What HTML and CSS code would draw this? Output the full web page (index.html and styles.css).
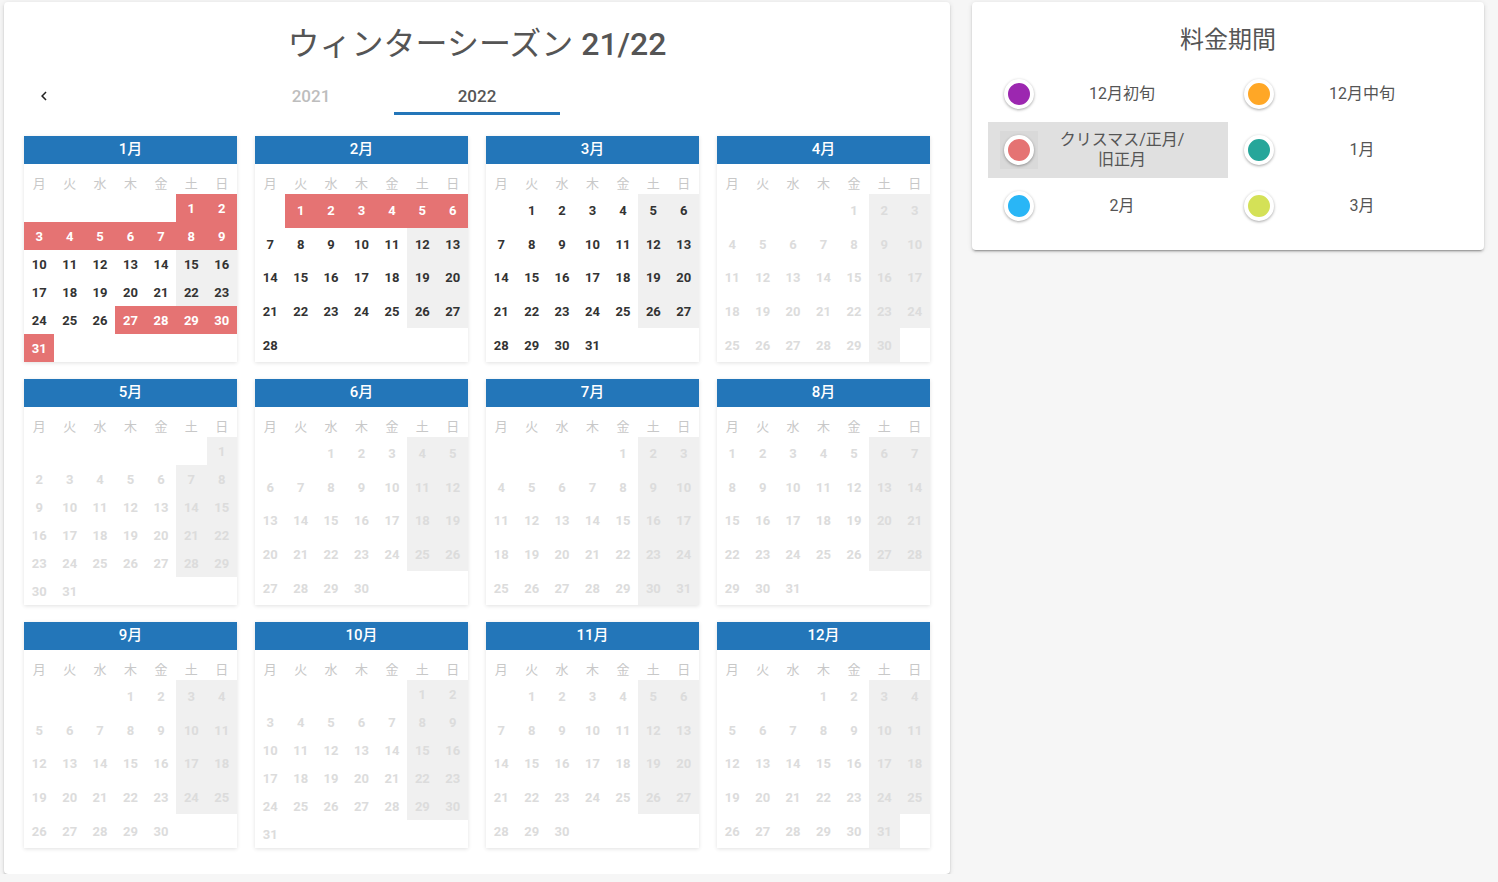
FILE: index.html
```html
<!DOCTYPE html>
<html lang="ja">
<head>
<meta charset="utf-8">
<title>ウィンターシーズン 21/22</title>
<link rel="stylesheet" href="styles.css">
</head>
<body>
<div class="page">
  <section class="main">
    <h1 class="title">ウィンターシーズン <span class="num">21/22</span></h1>
    <div class="tabs">
      <div class="arrow"><svg width="18" height="18" viewBox="0 0 24 24"><path d="M15.41 16.58L10.83 12l4.58-4.59L14 6l-6 6 6 6z" fill="#222"/></svg></div>
      <div class="tab first">2021</div>
      <div class="tab active">2022</div>
    </div>
    <div class="grid">
      <!-- Jan -->
      <div class="cal">
        <h3>1月</h3>
        <div class="wd"><span>月</span><span>火</span><span>水</span><span>木</span><span>金</span><span>土</span><span>日</span></div>
        <div class="body">
          <div class="wk"><span></span><span></span><span></span><span></span><span></span><span class="r">1</span><span class="r">2</span></div>
          <div class="wk"><span class="r">3</span><span class="r">4</span><span class="r">5</span><span class="r">6</span><span class="r">7</span><span class="r">8</span><span class="r">9</span></div>
          <div class="wk"><span>10</span><span>11</span><span>12</span><span>13</span><span>14</span><span class="w">15</span><span class="w">16</span></div>
          <div class="wk"><span>17</span><span>18</span><span>19</span><span>20</span><span>21</span><span class="w">22</span><span class="w">23</span></div>
          <div class="wk"><span>24</span><span>25</span><span>26</span><span class="r">27</span><span class="r">28</span><span class="r">29</span><span class="r">30</span></div>
          <div class="wk"><span class="r">31</span><span></span><span></span><span></span><span></span><span></span><span></span></div>
        </div>
      </div>
      <!-- Feb -->
      <div class="cal">
        <h3>2月</h3>
        <div class="wd"><span>月</span><span>火</span><span>水</span><span>木</span><span>金</span><span>土</span><span>日</span></div>
        <div class="body">
          <div class="wk"><span></span><span class="r">1</span><span class="r">2</span><span class="r">3</span><span class="r">4</span><span class="r">5</span><span class="r">6</span></div>
          <div class="wk"><span>7</span><span>8</span><span>9</span><span>10</span><span>11</span><span class="w">12</span><span class="w">13</span></div>
          <div class="wk"><span>14</span><span>15</span><span>16</span><span>17</span><span>18</span><span class="w">19</span><span class="w">20</span></div>
          <div class="wk"><span>21</span><span>22</span><span>23</span><span>24</span><span>25</span><span class="w">26</span><span class="w">27</span></div>
          <div class="wk"><span>28</span><span></span><span></span><span></span><span></span><span></span><span></span></div>
        </div>
      </div>
      <!-- Mar -->
      <div class="cal">
        <h3>3月</h3>
        <div class="wd"><span>月</span><span>火</span><span>水</span><span>木</span><span>金</span><span>土</span><span>日</span></div>
        <div class="body">
          <div class="wk"><span></span><span>1</span><span>2</span><span>3</span><span>4</span><span class="w">5</span><span class="w">6</span></div>
          <div class="wk"><span>7</span><span>8</span><span>9</span><span>10</span><span>11</span><span class="w">12</span><span class="w">13</span></div>
          <div class="wk"><span>14</span><span>15</span><span>16</span><span>17</span><span>18</span><span class="w">19</span><span class="w">20</span></div>
          <div class="wk"><span>21</span><span>22</span><span>23</span><span>24</span><span>25</span><span class="w">26</span><span class="w">27</span></div>
          <div class="wk"><span>28</span><span>29</span><span>30</span><span>31</span><span></span><span></span><span></span></div>
        </div>
      </div>
      <!-- Apr -->
      <div class="cal dim">
        <h3>4月</h3>
        <div class="wd"><span>月</span><span>火</span><span>水</span><span>木</span><span>金</span><span>土</span><span>日</span></div>
        <div class="body">
          <div class="wk"><span></span><span></span><span></span><span></span><span>1</span><span class="w">2</span><span class="w">3</span></div>
          <div class="wk"><span>4</span><span>5</span><span>6</span><span>7</span><span>8</span><span class="w">9</span><span class="w">10</span></div>
          <div class="wk"><span>11</span><span>12</span><span>13</span><span>14</span><span>15</span><span class="w">16</span><span class="w">17</span></div>
          <div class="wk"><span>18</span><span>19</span><span>20</span><span>21</span><span>22</span><span class="w">23</span><span class="w">24</span></div>
          <div class="wk"><span>25</span><span>26</span><span>27</span><span>28</span><span>29</span><span class="w">30</span><span></span></div>
        </div>
      </div>
      <!-- May -->
      <div class="cal dim">
        <h3>5月</h3>
        <div class="wd"><span>月</span><span>火</span><span>水</span><span>木</span><span>金</span><span>土</span><span>日</span></div>
        <div class="body">
          <div class="wk"><span></span><span></span><span></span><span></span><span></span><span></span><span class="w">1</span></div>
          <div class="wk"><span>2</span><span>3</span><span>4</span><span>5</span><span>6</span><span class="w">7</span><span class="w">8</span></div>
          <div class="wk"><span>9</span><span>10</span><span>11</span><span>12</span><span>13</span><span class="w">14</span><span class="w">15</span></div>
          <div class="wk"><span>16</span><span>17</span><span>18</span><span>19</span><span>20</span><span class="w">21</span><span class="w">22</span></div>
          <div class="wk"><span>23</span><span>24</span><span>25</span><span>26</span><span>27</span><span class="w">28</span><span class="w">29</span></div>
          <div class="wk"><span>30</span><span>31</span><span></span><span></span><span></span><span></span><span></span></div>
        </div>
      </div>
      <!-- Jun -->
      <div class="cal dim">
        <h3>6月</h3>
        <div class="wd"><span>月</span><span>火</span><span>水</span><span>木</span><span>金</span><span>土</span><span>日</span></div>
        <div class="body">
          <div class="wk"><span></span><span></span><span>1</span><span>2</span><span>3</span><span class="w">4</span><span class="w">5</span></div>
          <div class="wk"><span>6</span><span>7</span><span>8</span><span>9</span><span>10</span><span class="w">11</span><span class="w">12</span></div>
          <div class="wk"><span>13</span><span>14</span><span>15</span><span>16</span><span>17</span><span class="w">18</span><span class="w">19</span></div>
          <div class="wk"><span>20</span><span>21</span><span>22</span><span>23</span><span>24</span><span class="w">25</span><span class="w">26</span></div>
          <div class="wk"><span>27</span><span>28</span><span>29</span><span>30</span><span></span><span></span><span></span></div>
        </div>
      </div>
      <!-- Jul -->
      <div class="cal dim">
        <h3>7月</h3>
        <div class="wd"><span>月</span><span>火</span><span>水</span><span>木</span><span>金</span><span>土</span><span>日</span></div>
        <div class="body">
          <div class="wk"><span></span><span></span><span></span><span></span><span>1</span><span class="w">2</span><span class="w">3</span></div>
          <div class="wk"><span>4</span><span>5</span><span>6</span><span>7</span><span>8</span><span class="w">9</span><span class="w">10</span></div>
          <div class="wk"><span>11</span><span>12</span><span>13</span><span>14</span><span>15</span><span class="w">16</span><span class="w">17</span></div>
          <div class="wk"><span>18</span><span>19</span><span>20</span><span>21</span><span>22</span><span class="w">23</span><span class="w">24</span></div>
          <div class="wk"><span>25</span><span>26</span><span>27</span><span>28</span><span>29</span><span class="w">30</span><span class="w">31</span></div>
        </div>
      </div>
      <!-- Aug -->
      <div class="cal dim">
        <h3>8月</h3>
        <div class="wd"><span>月</span><span>火</span><span>水</span><span>木</span><span>金</span><span>土</span><span>日</span></div>
        <div class="body">
          <div class="wk"><span>1</span><span>2</span><span>3</span><span>4</span><span>5</span><span class="w">6</span><span class="w">7</span></div>
          <div class="wk"><span>8</span><span>9</span><span>10</span><span>11</span><span>12</span><span class="w">13</span><span class="w">14</span></div>
          <div class="wk"><span>15</span><span>16</span><span>17</span><span>18</span><span>19</span><span class="w">20</span><span class="w">21</span></div>
          <div class="wk"><span>22</span><span>23</span><span>24</span><span>25</span><span>26</span><span class="w">27</span><span class="w">28</span></div>
          <div class="wk"><span>29</span><span>30</span><span>31</span><span></span><span></span><span></span><span></span></div>
        </div>
      </div>
      <!-- Sep -->
      <div class="cal dim">
        <h3>9月</h3>
        <div class="wd"><span>月</span><span>火</span><span>水</span><span>木</span><span>金</span><span>土</span><span>日</span></div>
        <div class="body">
          <div class="wk"><span></span><span></span><span></span><span>1</span><span>2</span><span class="w">3</span><span class="w">4</span></div>
          <div class="wk"><span>5</span><span>6</span><span>7</span><span>8</span><span>9</span><span class="w">10</span><span class="w">11</span></div>
          <div class="wk"><span>12</span><span>13</span><span>14</span><span>15</span><span>16</span><span class="w">17</span><span class="w">18</span></div>
          <div class="wk"><span>19</span><span>20</span><span>21</span><span>22</span><span>23</span><span class="w">24</span><span class="w">25</span></div>
          <div class="wk"><span>26</span><span>27</span><span>28</span><span>29</span><span>30</span><span></span><span></span></div>
        </div>
      </div>
      <!-- Oct -->
      <div class="cal dim">
        <h3>10月</h3>
        <div class="wd"><span>月</span><span>火</span><span>水</span><span>木</span><span>金</span><span>土</span><span>日</span></div>
        <div class="body">
          <div class="wk"><span></span><span></span><span></span><span></span><span></span><span class="w">1</span><span class="w">2</span></div>
          <div class="wk"><span>3</span><span>4</span><span>5</span><span>6</span><span>7</span><span class="w">8</span><span class="w">9</span></div>
          <div class="wk"><span>10</span><span>11</span><span>12</span><span>13</span><span>14</span><span class="w">15</span><span class="w">16</span></div>
          <div class="wk"><span>17</span><span>18</span><span>19</span><span>20</span><span>21</span><span class="w">22</span><span class="w">23</span></div>
          <div class="wk"><span>24</span><span>25</span><span>26</span><span>27</span><span>28</span><span class="w">29</span><span class="w">30</span></div>
          <div class="wk"><span>31</span><span></span><span></span><span></span><span></span><span></span><span></span></div>
        </div>
      </div>
      <!-- Nov -->
      <div class="cal dim">
        <h3>11月</h3>
        <div class="wd"><span>月</span><span>火</span><span>水</span><span>木</span><span>金</span><span>土</span><span>日</span></div>
        <div class="body">
          <div class="wk"><span></span><span>1</span><span>2</span><span>3</span><span>4</span><span class="w">5</span><span class="w">6</span></div>
          <div class="wk"><span>7</span><span>8</span><span>9</span><span>10</span><span>11</span><span class="w">12</span><span class="w">13</span></div>
          <div class="wk"><span>14</span><span>15</span><span>16</span><span>17</span><span>18</span><span class="w">19</span><span class="w">20</span></div>
          <div class="wk"><span>21</span><span>22</span><span>23</span><span>24</span><span>25</span><span class="w">26</span><span class="w">27</span></div>
          <div class="wk"><span>28</span><span>29</span><span>30</span><span></span><span></span><span></span><span></span></div>
        </div>
      </div>
      <!-- Dec -->
      <div class="cal dim">
        <h3>12月</h3>
        <div class="wd"><span>月</span><span>火</span><span>水</span><span>木</span><span>金</span><span>土</span><span>日</span></div>
        <div class="body">
          <div class="wk"><span></span><span></span><span></span><span>1</span><span>2</span><span class="w">3</span><span class="w">4</span></div>
          <div class="wk"><span>5</span><span>6</span><span>7</span><span>8</span><span>9</span><span class="w">10</span><span class="w">11</span></div>
          <div class="wk"><span>12</span><span>13</span><span>14</span><span>15</span><span>16</span><span class="w">17</span><span class="w">18</span></div>
          <div class="wk"><span>19</span><span>20</span><span>21</span><span>22</span><span>23</span><span class="w">24</span><span class="w">25</span></div>
          <div class="wk"><span>26</span><span>27</span><span>28</span><span>29</span><span>30</span><span class="w">31</span><span></span></div>
        </div>
      </div>
    </div>
  </section>

  <aside class="legend">
    <h2>料金期間</h2>
    <div class="items">
      <div class="item"><span class="btn"><span class="dot purple"></span></span><span class="label">12月初旬</span></div>
      <div class="item"><span class="btn"><span class="dot orange"></span></span><span class="label">12月中旬</span></div>
      <div class="item sel"><span class="btn"><span class="dot red"></span></span><span class="label">クリスマス/正月/旧正月</span></div>
      <div class="item"><span class="btn"><span class="dot teal"></span></span><span class="label">1月</span></div>
      <div class="item"><span class="btn"><span class="dot blue"></span></span><span class="label">2月</span></div>
      <div class="item"><span class="btn"><span class="dot lime"></span></span><span class="label">3月</span></div>
    </div>
  </aside>
</div>
</body>
</html>
```
FILE: styles.css
```css
html, body {
  margin: 0;
  background: #f6f6f6;
  font-family: Roboto, "Noto Sans CJK JP", sans-serif;
}

.page {
  display: flex;
  align-items: flex-start;
  gap: 22px;
  padding: 2px 14px 0 4px;
}

.main {
  width: 946px;
  height: 872px;
  box-sizing: border-box;
  background: #fff;
  border-radius: 4px;
  box-shadow: 0 3px 1px -2px rgba(0,0,0,.2), 0 2px 2px 0 rgba(0,0,0,.14), 0 1px 5px 0 rgba(0,0,0,.12);
  padding: 22px 20px 0;
}

.title {
  margin: 0;
  text-align: center;
  font-size: 32px;
  line-height: 40px;
  font-weight: 400;
  color: #555;
}

.title .num {
  font-weight: 500;
}

.tabs {
  display: flex;
  height: 48px;
  margin-top: 4px;
}

.arrow {
  width: 40px;
  display: flex;
  align-items: center;
  justify-content: center;
  padding-top: 8px;
  box-sizing: border-box;
}

.tab {
  width: 166px;
  display: flex;
  align-items: center;
  justify-content: center;
  padding-top: 8px;
  box-sizing: border-box;
  font-size: 17px;
  font-weight: 500;
  color: #bdbdbd;
  position: relative;
}

.tab.first {
  margin-left: 164px;
}

.tab.active {
  color: #555;
}

.tab.active::after {
  content: "";
  position: absolute;
  left: 0;
  right: 0;
  bottom: 1px;
  height: 3px;
  background: #2376b9;
}

.grid {
  display: grid;
  grid-template-columns: repeat(4, 1fr);
  column-gap: 18px;
  row-gap: 17px;
  margin-top: 20px;
}

.cal {
  height: 226px;
  display: flex;
  flex-direction: column;
  background: #fff;
  box-shadow: 0 1px 4px rgba(0,0,0,.12);
}

.cal h3 {
  margin: 0;
  height: 28px;
  line-height: 26px;
  background: #2376b9;
  color: #fff;
  text-align: center;
  font-size: 15px;
  font-weight: 500;
}

.wd {
  display: grid;
  grid-template-columns: repeat(7, 1fr);
  height: 30px;
  padding-top: 11px;
  box-sizing: border-box;
  font-size: 13px;
  line-height: 18px;
  color: #c8c8c8;
  text-align: center;
}

.body {
  flex: 1;
  display: flex;
  flex-direction: column;
}

.wk {
  flex: 1;
  display: grid;
  grid-template-columns: repeat(7, 1fr);
}

.wk span {
  display: flex;
  align-items: center;
  justify-content: center;
  font-size: 13px;
  font-weight: 700;
  color: #333;
}

.wk .w {
  background: #f0f0f0;
}

.wk .r {
  background: #e57373;
  color: #fff;
}

.dim .wk span {
  color: #dcdcdc;
}

.legend {
  width: 512px;
  height: 248px;
  box-sizing: border-box;
  background: #fff;
  border-radius: 4px;
  box-shadow: 0 3px 1px -2px rgba(0,0,0,.2), 0 2px 2px 0 rgba(0,0,0,.14), 0 1px 5px 0 rgba(0,0,0,.12);
  padding: 18px 16px 16px;
}

.legend h2 {
  margin: 0 0 6px;
  text-align: center;
  font-size: 24px;
  line-height: 40px;
  font-weight: 400;
  color: #555;
}

.items {
  display: grid;
  grid-template-columns: 1fr 1fr;
  grid-auto-rows: 56px;
}

.item {
  display: flex;
  align-items: center;
  padding-left: 12px;
  padding-right: 34px;
}

.item.sel {
  background: #e0e0e0;
}

.btn {
  width: 38px;
  height: 38px;
  flex: none;
  display: flex;
  align-items: center;
  justify-content: center;
}

.sel .btn {
  background: #d9d9d9;
}

.dot {
  width: 22px;
  height: 22px;
  border: 4px solid #fff;
  border-radius: 50%;
  box-shadow: 0 1px 3px rgba(0,0,0,.35);
}

.purple { background: #9c27b0; }
.orange { background: #ffa726; }
.red { background: #e57373; }
.teal { background: #26a69a; }
.blue { background: #29b6f6; }
.lime { background: #d4e157; }

.label {
  flex: 1;
  padding: 0 4px 0 16px;
  text-align: center;
  font-size: 16px;
  line-height: 20px;
  color: #555;
}
```
